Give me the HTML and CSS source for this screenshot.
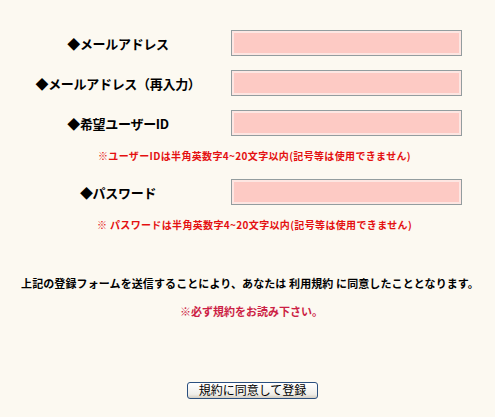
FILE: index.html
```html
<!DOCTYPE html>
<html lang="ja">
<head>
  <meta charset="UTF-8">
  <title>会員登録</title>
  <link rel="stylesheet" href="styles.css">
</head>
<body>
  <form class="entry" onsubmit="return false;">
    <div class="field">
      <label for="mail">◆メールアドレス</label>
      <input type="text" id="mail">
    </div>
    <div class="field">
      <label for="mail2">◆メールアドレス（再入力）</label>
      <input type="text" id="mail2">
    </div>
    <div class="field">
      <label for="userid">◆希望ユーザーID</label>
      <input type="text" id="userid">
    </div>
    <p class="note">※ユーザーIDは半角英数字4~20文字以内(記号等は使用できません)</p>
    <div class="field field-pass">
      <label for="pass">◆パスワード</label>
      <input type="password" id="pass">
    </div>
    <p class="note">※ パスワードは半角英数字4~20文字以内(記号等は使用できません)</p>

    <p class="agree">上記の登録フォームを送信することにより、あなたは 利用規約 に同意したこととなります。</p>
    <p class="warn">※必ず規約をお読み下さい。</p>

    <div class="submit">
      <button type="submit">規約に同意して登録</button>
    </div>
  </form>
</body>
</html>
```
FILE: styles.css
```css
body {
  margin: 0;
  background-color: #fcf9f1;
  font-family: "Noto Sans CJK JP", "DejaVu Sans", sans-serif;
  color: #000;
}
.entry {
  padding-top: 30px;
}
.field {
  display: grid;
  grid-template-columns: 218px 231px;
  column-gap: 4px;
  align-items: center;
  padding-left: 9px;
  height: 26px;
  margin-bottom: 14px;
}
.field-pass {
  margin-top: 17px;
}
label {
  text-align: center;
  font-size: 13px;
  font-weight: bold;
  letter-spacing: -0.3px;
}
input {
  box-sizing: border-box;
  width: 231px;
  height: 26px;
  border: 1px solid #939d9f;
  background-color: #fdcac4;
  box-shadow: inset 0 0 0 2px #fde6e2;
  padding: 2px 4px;
  font-size: 13px;
  outline: none;
}
.note {
  margin: 0;
  padding-left: 14px;
  text-align: center;
  color: #e41010;
  font-size: 10px;
  line-height: 12px;
  font-weight: bold;
  letter-spacing: 0.35px;
}
.agree {
  margin: 45px 0 0;
  padding-left: 5px;
  text-align: center;
  font-size: 11px;
  line-height: 14px;
  font-weight: bold;
  letter-spacing: 0.1px;
}
.warn {
  margin: 14px 0 0;
  padding-left: 8px;
  text-align: center;
  color: #cc1f45;
  font-size: 11px;
  line-height: 14px;
  font-weight: bold;
}
.submit {
  margin-top: 58px;
  padding-left: 10px;
  text-align: center;
}
button {
  width: 131px;
  height: 17px;
  padding: 0;
  border: 1px solid #2a4f7f;
  border-radius: 3px;
  background: linear-gradient(#ffffff, #efeee9 75%, #d4cec2);
  font-family: "Noto Sans CJK JP", sans-serif;
  font-size: 12px;
  line-height: 14px;
  color: #000;
}
```
